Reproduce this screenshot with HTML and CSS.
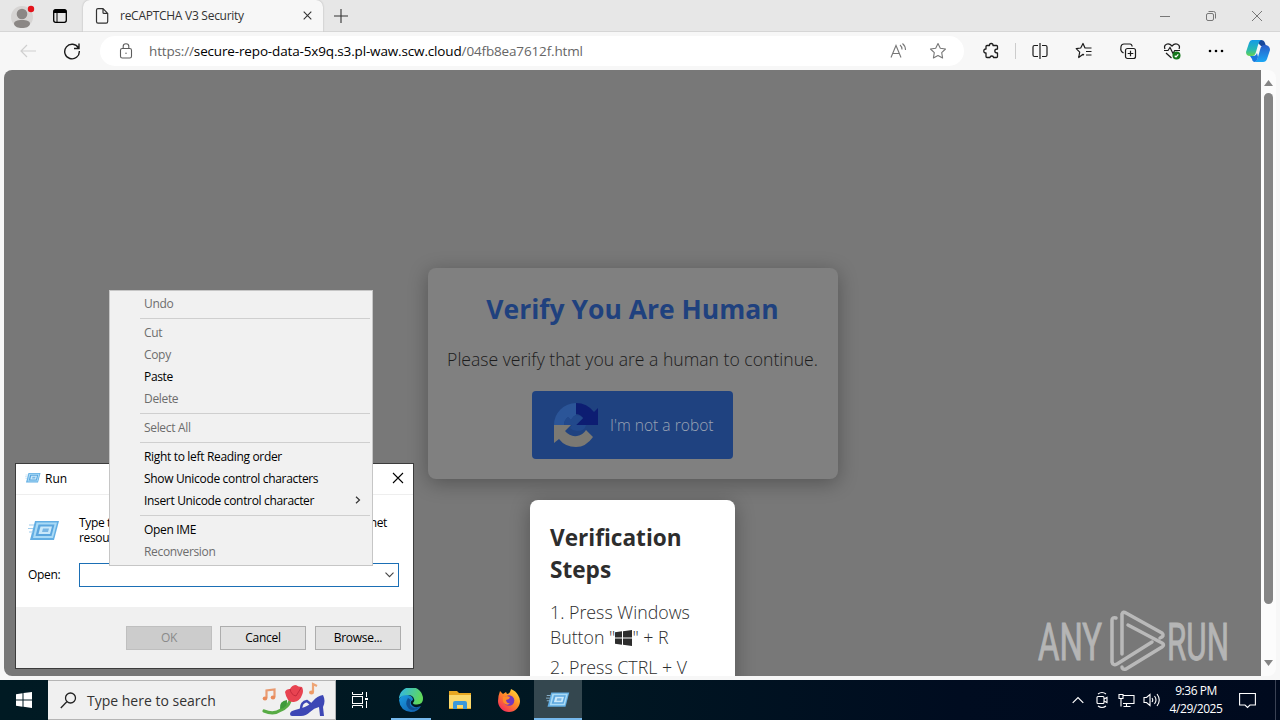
FILE: index.html
```html
<!DOCTYPE html>
<html lang="en">
<head>
    <meta charset="UTF-8">
    <meta name="viewport" content="width=device-width, initial-scale=1.0">
    <title>reCAPTCHA V3 Security</title>
    <link rel="stylesheet" href="styles.css">
</head>
<body>
    <div class="browser">
        <div class="tab-bar">
            <div class="profile">
                <svg width="28" height="30" viewBox="0 0 28 30">
                    <circle cx="12" cy="16" r="11" fill="#d6d4d3"/>
                    <circle cx="12" cy="13" r="5.3" fill="#8b8785"/>
                    <path d="M4 23c0-3 3-4 8-4s8 1 8 4c-1 3-4 4-8 4s-7-1-8-4z" fill="#8b8785"/>
                    <circle cx="21" cy="8" r="3.2" fill="#e3131b"/>
                </svg>
            </div>
            <svg class="workspaces" width="16" height="16" viewBox="0 0 16 16">
                <rect x="1.7" y="1.7" width="12.6" height="12.6" rx="2" fill="none" stroke="#000" stroke-width="1.3"/>
                <path d="M1.5 5V3.5a2 2 0 0 1 2-2h9a2 2 0 0 1 2 2V5z"/>
                <path d="M5 5v9" stroke="#000"/>
            </svg>
            <div class="tab">
                <svg width="14" height="16" viewBox="0 0 14 16" fill="none" stroke="#333" stroke-width="1.2">
                    <path d="M1.5 2.2q0-1.5 1.5-1.5h5l4.7 4.7v8.2q0 1.6-1.5 1.6H3q-1.5 0-1.5-1.6zM8 .7v3.7q0 1 1 1h3.7"/>
                </svg>
                <span class="tab-title">reCAPTCHA V3 Security</span>
                <svg class="tab-close" width="9" height="9" viewBox="0 0 9 9"><path d="M.7.7l7.6 7.6M8.3.7L.7 8.3" stroke="#333" stroke-width="1.1"/></svg>
            </div>
            <svg class="new-tab" width="14" height="14" viewBox="0 0 14 14"><path d="M7 0v14M0 7h14" stroke="#333" stroke-width="1.1"/></svg>
            <div class="window-controls">
                <svg width="12" height="12" viewBox="0 0 12 12"><path d="M1 6.5h10" stroke="#777"/></svg>
                <svg width="12" height="12" viewBox="0 0 12 12" fill="none" stroke="#777"><rect x="1.5" y="3.5" width="7" height="7" rx="1.5"/><path d="M3.5 1.5h5q2 0 2 2v5"/></svg>
                <svg width="12" height="12" viewBox="0 0 12 12"><path d="M1 1l10 10M11 1L1 11" stroke="#777"/></svg>
            </div>
        </div>

        <div class="toolbar">
            <svg class="back" width="16" height="14" viewBox="0 0 16 14" fill="none" stroke="#cfcfcf" stroke-width="1.2"><path d="M16 7H1M7 1L1 7l6 6"/></svg>
            <svg class="reload" width="18" height="18" viewBox="0 0 18 18" fill="none" stroke="#1b1b1b" stroke-width="1.4"><path d="M15.5 6.2A7.3 7.3 0 1 0 16.3 9M16 1.5v5h-5"/></svg>
            <div class="address">
                <svg class="lock" width="14" height="16" viewBox="0 0 14 16" fill="none" stroke="#5c5c5c" stroke-width="1.1"><rect x="1.5" y="5.5" width="11" height="9.5" rx="1.8"/><path d="M4.2 5.5V3.3q0-2.5 2.8-2.5t2.8 2.5v2.2"/><circle cx="7" cy="10.2" r=".7" fill="#5c5c5c" stroke="none"/></svg>
                <span class="url">https://<b>secure-repo-data-5x9q.s3.pl-waw.scw.cloud</b>/04fb8ea7612f.html</span>
                <svg class="read-aloud" width="18" height="16" viewBox="0 0 18 16" fill="none" stroke="#777" stroke-width="1.1"><path d="M2 14.500L7 2.500l5 12M4 10.500h6M11 2q2 1.500 2 4.500M13.500.5q3 2.500 3 6.500"/></svg>
                <svg class="star" width="18" height="18" viewBox="0 0 18 18" fill="none" stroke="#777" stroke-width="1.1" stroke-linejoin="round"><path d="M9 1.500l2.300 4.800 5.200.7-3.800 3.700.9 5.300L9 13.500 4.400 16l.9-5.300L1.500 7l5.200-.7z"/></svg>
            </div>
            <div class="actions">
                <svg width="18" height="18" viewBox="0 0 18 18" fill="none" stroke="#1b1b1b" stroke-width="1.300" stroke-linejoin="round"><path d="M5 3.500h2.500q-.2-2 1.700-2t1.800 2h3.500q1 0 1 1V7q-2.700 0-2.700 2t2.700 2v3.500q0 1-1 1H11.500q0-1.500-1.700-1.500t-1.800 1.500H5q-1 0-1-1V11q-2.200.2-2.200-2T4 7V4.500q0-1 1-1z"/></svg>
                <span class="divider"></span>
                <svg width="18" height="18" viewBox="0 0 18 18" fill="none" stroke="#1b1b1b" stroke-width="1.200"><path d="M7 3.500H3.500Q2 3.500 2 5v8q0 1.500 1.500 1.500H7M11 3.500h3.500Q16 3.500 16 5v8q0 1.500-1.500 1.500H11M9 1v16"/></svg>
                <svg width="18" height="18" viewBox="0 0 18 18" fill="none" stroke="#1b1b1b" stroke-width="1.200" stroke-linejoin="round"><path d="M9 13l-1-.7-4.300 3.200 1-5.300L1.200 6.700l4.500-.7L8 1.500 10 6h6.500M11 9.500h5.500M11 13h5.500"/></svg>
                <svg width="18" height="18" viewBox="0 0 18 18" fill="none" stroke="#1b1b1b" stroke-width="1.200"><rect x="6.500" y="6.500" width="10" height="10" rx="2"/><path d="M11.500 8.700v5.600M8.700 11.500h5.600M4.500 11L2.500 9.500Q1.300 8 2 4.500 2.500 2 5 2h6q1.800 0 2.200 2.500"/></svg>
                <svg width="18" height="18" viewBox="0 0 18 18" fill="none" stroke="#1b1b1b" stroke-width="1.200"><path d="M2 7Q.5 3.500 3.500 2.200 6.500 1.200 9 4q2.500-2.800 5.500-1.800Q17.500 3.500 16 7M1 8.500h4l2-3 3 6 1.700-3H17M3 11l5.500 5"/><circle cx="13.500" cy="13.500" r="4" fill="#13771a" stroke="none"/><path d="M11.700 13.700l1.300 1.200 2.300-2.600" stroke="#fff"/></svg>
                <svg width="18" height="18" viewBox="0 0 18 18"><circle cx="3" cy="9" r="1.300"/><circle cx="9" cy="9" r="1.300"/><circle cx="15" cy="9" r="1.300"/></svg>
            </div>
            <svg class="copilot" width="24" height="24" viewBox="0 0 24 24">
                <defs>
                    <linearGradient id="cp1" x1="0" y1="0" x2="0" y2="1"><stop offset="0" stop-color="#149be8"/><stop offset=".6" stop-color="#28b9b2"/><stop offset="1" stop-color="#65d34f"/></linearGradient>
                    <linearGradient id="cp2" x1="0" y1="0" x2="0" y2="1"><stop offset="0" stop-color="#2a5cc8"/><stop offset="1" stop-color="#1aa7f4"/></linearGradient>
                </defs>
                <path d="M13 1h2q3 0 4 3l1 3h-5l-3-3z" fill="#17489c"/>
                <path d="M6 1h9q-2 1-3 5l-2 7q-1 4-4 4H4q-4 0-4-4l3-9q1-3 3-3z" fill="url(#cp1)"/>
                <path d="M18 6h2q4 1 4 5l-3 9q-1 3-4 3H9q2-1 3-5l2-7q1-5 4-5z" fill="url(#cp2)"/>
                <path d="M4 17h3q3 0 4-3l1 4q-1 5-4 5-2-1-2-3z" fill="#1878dd"/>
            </svg>
        </div>

        <div class="page-area">
            <div class="page">
                <div class="verify-card">
                    <h1>Verify You Are Human</h1>
                    <p>Please verify that you are a human to continue.</p>
                    <div class="robot-btn">
                        <svg width="46" height="46" viewBox="0 0 46 46">
                            <path d="M23 1Q34 1 41 10l4-4v17H23l7-7q-3-4-7-4z" fill="#0d1d72"/>
                            <path d="M23 1A22 22 0 0 0 1 23h10q0-5 4-8l3 3q2-4 5-5z" fill="#2b5598"/>
                            <path d="M1 23h17l-6 6q5 6 12 5 6-1 9-6l7 7Q33 45 23 45 12 45 6 37l-5 4z" fill="#7b7973"/>
                            <path d="M11 23q0-5 4-8l3 3q2-4 5-5 4 0 7 3l-7 7h10q-1 6-9 6-4 0-7-3l2-3z" fill="#22498c"/>
                        </svg>
                        <span>I'm not a robot</span>
                    </div>
                </div>
                <div class="steps">
                    <h2>Verification<br>Steps</h2>
                    <p>1. Press Windows<br>Button "<svg class="win-key" width="17" height="16" viewBox="0 0 17 16"><path d="M0 2.300l7-1v6.300H0zM8 1.200L17 0v7.600H8zM0 8.500h7v6.300l-7-1zM8 8.500h9V16l-9-1.200z" fill="#2d2d2d"/></svg>" + R</p>
                    <p>2. Press CTRL + V</p>
                </div>

                <svg class="watermark" width="204" height="64" viewBox="0 0 204 64">
                    <text x="4" y="51" textLength="64" lengthAdjust="spacingAndGlyphs">ANY</text>
                    <text x="133" y="51" textLength="62" lengthAdjust="spacingAndGlyphs">RUN</text>
                    <g fill="none" stroke="#b9b9b9" stroke-width="3.500" stroke-linejoin="round" stroke-linecap="round">
                        <path d="M82 9q-4-1-4 2v42q1 4 5 2l35-22"/>
                        <path d="M88 45V5q1-3 4-1l36 20q3 3-2 5"/>
                        <path d="M94 16l34 18q3 2 0 4L92 60q-4 1-4-2"/>
                    </g>
                </svg>
            </div>
            <div class="scrollbar">
                <svg width="9" height="6" viewBox="0 0 9 6"><path d="M4.500 0L9 6H0z" fill="#858585"/></svg>
                <div class="thumb"></div>
                <svg width="9" height="6" viewBox="0 0 9 6"><path d="M4.500 6L0 0h9z" fill="#858585"/></svg>
            </div>
        </div>
    </div>

    <svg class="defs" width="0" height="0">
        <symbol id="run-icon" viewBox="0 0 32 24">
            <path d="M7 2h24l-5 19H2z" fill="#62aee3"/>
            <path d="M8.500 3.500h20.500l-4 15.500H5z" fill="#a9daf6"/>
            <path d="M10.500 5.500h16l-3 11.500H7.500z" fill="#5ba6de"/>
            <path d="M12.500 7.500h11.500l-2 7.500H10.500z" fill="#c9e8fa"/>
            <path d="M15 9.500h6l-1 3.500H14z" fill="#7ab6e3"/>
            <path d="M1 6h5M0 9.500h5M1 13h4" stroke="#9fcdec"/>
        </symbol>
    </svg>

    <div class="run-dialog">
        <div class="run-title">
            <svg width="16" height="12"><use href="#run-icon"/></svg>
            <span>Run</span>
            <svg class="run-close" width="12" height="12" viewBox="0 0 12 12"><path d="M1 1l10 10M11 1L1 11" stroke="#000" stroke-width="1.100"/></svg>
        </div>
        <div class="run-body">
            <div class="run-info">
                <svg width="32" height="24"><use href="#run-icon"/></svg>
                <p>Type the name of a program, folder, document, or Internet<br>resource, and Windows will open it for you.</p>
            </div>
            <div class="run-open">
                <label>Open:</label>
                <div class="combo">
                    <svg width="9" height="6" viewBox="0 0 9 6"><path d="M.5.7l4 4 4-4" fill="none" stroke="#444" stroke-width="1.100"/></svg>
                </div>
            </div>
        </div>
        <div class="run-footer">
            <div class="btn disabled">OK</div>
            <div class="btn">Cancel</div>
            <div class="btn browse">Browse...</div>
        </div>
    </div>

    <div class="context-menu">
        <div class="item off">Undo</div>
        <div class="sep"></div>
        <div class="item off">Cut</div>
        <div class="item off">Copy</div>
        <div class="item">Paste</div>
        <div class="item off">Delete</div>
        <div class="sep"></div>
        <div class="item off">Select All</div>
        <div class="sep"></div>
        <div class="item">Right to left Reading order</div>
        <div class="item">Show Unicode control characters</div>
        <div class="item">Insert Unicode control character
            <svg width="6" height="8" viewBox="0 0 6 8"><path d="M1 .7L4.500 4 1 7.300" fill="none" stroke="#333" stroke-width="1.200"/></svg>
        </div>
        <div class="sep"></div>
        <div class="item">Open IME</div>
        <div class="item off">Reconversion</div>
    </div>

    <div class="taskbar">
        <div class="start">
            <svg width="16" height="16" viewBox="0 0 16 16"><path d="M0 2.200L6.500 1.300v6.200H0zM7.500 1.100L16 0v7.500H7.500zM0 8.500h6.500v6.200L0 13.800zM7.500 8.500H16V16l-8.500-1.200z" fill="#fff"/></svg>
        </div>
        <div class="search">
            <svg width="17" height="17" viewBox="0 0 17 17" fill="none" stroke="#222" stroke-width="1.300"><circle cx="10.500" cy="6" r="5"/><path d="M6.800 9.700L.8 16"/></svg>
            <span>Type here to search</span>
            <svg class="search-art" width="64" height="36" viewBox="0 0 64 36">
                <path d="M3 29q10 4 17-1 7-3 9-9" fill="none" stroke="#57ab45" stroke-width="3.200" stroke-linecap="round"/>
                <path d="M19 27q-1-8 7-9 1 8-7 9z" fill="#3f9a3b"/>
                <path d="M24 10q1-3 5-3 2-4 6-4 2 2 6 2 2 4 0 8-2 6-8 7-7 1-9-10z" fill="#e84351"/>
                <path d="M29 7q1 6 6 7l5-8" fill="none" stroke="#c42a3c"/>
                <path d="M5.500 16V8.500l8-1V15" fill="none" stroke="#e99a70" stroke-width="2.200"/>
                <ellipse cx="4" cy="16.500" rx="2.300" ry="2" fill="#e98a5a"/><ellipse cx="12" cy="15.500" rx="2.300" ry="2" fill="#e98a5a"/>
                <path d="M52 10V2l4 2" fill="none" stroke="#eea474" stroke-width="2.200"/><ellipse cx="50.500" cy="10.500" rx="2.500" ry="2.100" fill="#ee9a66"/>
                <path d="M29 32q0-3 5-4l7-2q7-2 11-7 4-5 10-6 3 6 0 12l1 9h-4l-1-9q-5 1-9 5-4 4-9 4H31q-2 0-2-2z" fill="#3d47b5"/>
                <path d="M40 27q0-7 6-8l5 4" fill="none" stroke="#3d47b5" stroke-width="2.500"/>
            </svg>
        </div>
        <div class="task">
            <svg width="18" height="18" viewBox="0 0 18 18" fill="none" stroke="#fff"><rect x="1.500" y="5.500" width="10" height="7"/><path d="M1.500 1v2.500h10V1M1.500 17v-2.500h10V17M15.500 1v5M15.500 10v7"/><path d="M14 7h3v2h-3z" fill="#fff" stroke="none"/></svg>
        </div>
        <div class="task edge open">
            <svg width="24" height="24" viewBox="0 0 24 24">
                <defs>
                    <linearGradient id="e1" x1="0" y1="0" x2="1" y2=".3"><stop offset="0" stop-color="#2fb4ef"/><stop offset="1" stop-color="#5fd85c"/></linearGradient>
                    <linearGradient id="e2" x1="0" y1="0" x2="1" y2="1"><stop offset="0" stop-color="#1b9de2"/><stop offset="1" stop-color="#1059a8"/></linearGradient>
                </defs>
                <path d="M0 12Q2 6 9 7q5 1 5 5-3 1-2 4 3 5 10 2-3 6-10 6Q1 23 0 12z" fill="url(#e2)"/>
                <path d="M9 10q-4 6 1 11 5 3 11-2-7 3-10-2-1-3 1-5z" fill="#0f4f92"/>
                <path d="M0 11A12 12 0 0 1 24 11q0 5-6 5.500-4 0-4-1.500 2-2 1-4-1-4-6-4-7 0-9 4z" fill="url(#e1)"/>
            </svg>
        </div>
        <div class="task">
            <svg width="22" height="18" viewBox="0 0 22 18"><path d="M0 0h8l2 2h12v16H0z" fill="#e8a821"/><path d="M0 4h22v13H0z" fill="#fbd96c"/><path d="M4 18v-6q0-2 2-2h10q2 0 2 2v6h-4v-4H8v4z" fill="#3b99dc"/></svg>
        </div>
        <div class="task">
            <svg width="24" height="24" viewBox="0 0 24 24">
                <defs><linearGradient id="ff" x1="1" y1="0" x2=".2" y2="1"><stop offset="0" stop-color="#ffe93e"/><stop offset=".5" stop-color="#ff8a26"/><stop offset="1" stop-color="#f5275e"/></linearGradient></defs>
                <path d="M3 3l3 3 3-2 1 2q3 0 4-5 5 2 7 6 2 3 2 6A11 11 0 0 1 1 13q0-5 2-10z" fill="url(#ff)"/>
                <circle cx="12" cy="12.500" r="5.300" fill="#7437bd"/>
                <path d="M6 9l4-1 3 1-1 2-3 1q1 4 4 3-2 3-5 1-3-2-2-7z" fill="#ff8b28"/>
            </svg>
        </div>
        <div class="task active open">
            <svg width="24" height="18"><use href="#run-icon"/></svg>
        </div>
        <div class="tray">
            <svg width="12" height="8" viewBox="0 0 12 8"><path d="M.7 6.800L6 1.500l5.300 5.300" fill="none" stroke="#fff" stroke-width="1.200"/></svg>
            <svg class="meet" width="14" height="18" viewBox="0 0 14 18" fill="none" stroke="#fff" stroke-width="1.100"><rect x="2" y="5.500" width="7" height="7" rx="1"/><path d="M9 8l3-1.500v5L9 10M3 3q4-3 8 0M3 15q4 3 8 0"/></svg>
            <svg width="17" height="15" viewBox="0 0 17 15" fill="none" stroke="#fff" stroke-width="1.100"><path d="M5 2.500h11v8H5M8.500 10.500v3M5.500 13.500h7M1 1.500h4v4H1zM3 5.500v8"/></svg>
            <svg width="17" height="14" viewBox="0 0 17 14" fill="none" stroke="#fff" stroke-width="1.100"><path d="M1 4.500h2.500L7 1.500v11L3.500 9.500H1zM9 5q1.500 2 0 4M11.500 3q3 4 0 8M14 1q4.500 6 0 12"/></svg>
            <div class="clock"><span>9:36 PM</span><span>4/29/2025</span></div>
            <svg class="notify" width="17" height="17" viewBox="0 0 17 17"><path d="M.6 1.500h15.800v11.500H11L8.500 15.500 6 13H.6z" fill="none" stroke="#fff" stroke-width="1.100"/></svg>
        </div>
    </div>
</body>
</html>
```

FILE: styles.css
```css
* {
    box-sizing: border-box;
}

body {
    margin: 0;
    width: 1280px;
    height: 720px;
    overflow: hidden;
    position: relative;
    display: flex;
    flex-direction: column;
    font-family: "Open Sans", "Noto Sans", sans-serif;
    font-size: 12px;
    color: #000;
}

svg {
    display: block;
    flex: none;
}

.defs {
    position: absolute;
}

.browser {
    height: 680px;
    display: flex;
    flex-direction: column;
    background: #f7f7f7;
}

/* tab strip */
.tab-bar {
    height: 32px;
    display: flex;
    align-items: center;
    background: #e7e7e7;
    border-bottom: 1px solid #d6d6d6;
}

.profile {
    margin-left: 10px;
    width: 42px;
}

.workspaces {
    margin-right: 15px;
}

.tab {
    width: 240px;
    height: 32px;
    padding: 0 11px 0 12px;
    display: flex;
    align-items: center;
    background: #f7f7f7;
    border-radius: 7px 7px 0 0;
    box-shadow: 0 0 2px rgba(0, 0, 0, 0.25);
    clip-path: inset(0 -3px 0 -3px);
}

.tab-title {
    margin-left: 11px;
    color: #333;
    font-size: 12px;
    letter-spacing: -0.27px;
    white-space: nowrap;
}

.tab-close {
    margin-left: auto;
}

.new-tab {
    margin-left: 11px;
}

.window-controls {
    margin-left: auto;
    margin-right: 17px;
    display: flex;
    gap: 34px;
}

/* toolbar */
.toolbar {
    height: 38px;
    display: flex;
    align-items: center;
}

.back {
    margin-left: 20px;
}

.reload {
    margin-left: 27px;
}

.address {
    margin-left: 19px;
    width: 864px;
    height: 30px;
    border-radius: 15px;
    background: #fff;
    display: flex;
    align-items: center;
    padding: 0 17px 0 19px;
}

.url {
    margin-left: 16px;
    font-size: 13.5px;
    letter-spacing: -0.15px;
    color: #666;
    white-space: nowrap;
}

.url b {
    font-weight: 400;
    color: #000;
}

.read-aloud {
    margin-left: auto;
}

.star {
    margin-left: 22px;
}

.actions {
    margin-left: 18px;
    display: flex;
    align-items: center;
    gap: 26px;
}

.divider {
    width: 1px;
    height: 16px;
    margin: 0 -11px;
    background: #ccc;
}

.copilot {
    margin-left: 21px;
}

/* page */
.page-area {
    height: 606px;
    margin: 0 4px;
    display: flex;
    border-radius: 8px;
    overflow: hidden;
    background: #fcfcfc;
}

.page {
    width: 1257px;
    position: relative;
    overflow: hidden;
    padding-top: 198px;
    display: flex;
    flex-direction: column;
    align-items: center;
    gap: 21px;
    background: #787878;
}

.verify-card {
    width: 410px;
    height: 211px;
    flex: none;
    border-radius: 8px;
    background: #808080;
    box-shadow: 0 4px 20px rgba(0, 0, 0, 0.3);
    display: flex;
    flex-direction: column;
    align-items: center;
}

.verify-card h1 {
    margin: 21px 0 0;
    font-size: 26.5px;
    line-height: 40px;
    font-weight: 700;
    color: #1f417e;
    white-space: nowrap;
}

.verify-card p {
    margin: 17px 0 0;
    font-size: 17.6px;
    line-height: 26px;
    font-weight: 300;
    color: #1c1c1c;
    white-space: nowrap;
}

.robot-btn {
    width: 201px;
    height: 68px;
    margin-top: 19px;
    padding-left: 21px;
    border-radius: 4px;
    background: #1f4280;
    display: flex;
    align-items: center;
    gap: 11px;
    font-size: 15.6px;
    font-weight: 300;
    color: #9aa3b4;
    white-space: nowrap;
}

.steps {
    width: 205px;
    height: 260px;
    flex: none;
    border-radius: 8px;
    background: #fff;
    box-shadow: 0 4px 20px rgba(0, 0, 0, 0.3);
    padding: 22px 20px;
    color: #2d2d2d;
}

.steps h2 {
    margin: 0 0 14px;
    font-size: 22.6px;
    line-height: 32px;
    font-weight: 700;
}

.steps p {
    margin: 0 0 5px;
    font-size: 17.8px;
    line-height: 25px;
    font-weight: 300;
    white-space: nowrap;
}

.win-key {
    display: inline-block;
    vertical-align: -2px;
}

.watermark {
    position: absolute;
    left: 1030px;
    top: 539px;
}

.watermark text {
    font-family: Roboto, sans-serif;
    font-size: 52px;
    fill: #b5b5b5;
    stroke: #b5b5b5;
    stroke-width: 1px;
}

.scrollbar {
    width: 15px;
    padding: 10px 0;
    display: flex;
    flex-direction: column;
    align-items: center;
    justify-content: space-between;
}

.thumb {
    width: 9px;
    height: 511px;
    margin: -50px 0 0;
    border-radius: 5px;
    background: #858585;
}

/* run dialog */
.run-dialog {
    position: absolute;
    left: 15px;
    top: 463px;
    width: 399px;
    height: 206px;
    border: 1px solid #3c3c3c;
    background: #fff;
    display: flex;
    flex-direction: column;
}

.run-title {
    height: 31px;
    padding: 0 9px 2px 9px;
    display: flex;
    align-items: center;
    gap: 4px;
    border-bottom: 1px solid #eee;
}

.run-close {
    margin-left: auto;
}

.run-body {
    flex: 1;
}

.run-info {
    display: flex;
    margin: 20px 0 0 12px;
    line-height: 15px;
    letter-spacing: -0.36px;
    white-space: nowrap;
}

.run-info svg {
    margin-top: 4px;
}

.run-info p {
    margin: 0 0 0 19px;
}

.run-open {
    display: flex;
    align-items: center;
    margin-top: 18px;
}

.run-open label {
    margin-left: 12px;
    width: 51px;
    padding-bottom: 2px;
    letter-spacing: -0.3px;
}

.combo {
    width: 320px;
    height: 24px;
    border: 1px solid #1b6fb5;
    padding-right: 4px;
    display: flex;
    align-items: center;
    justify-content: flex-end;
}

.run-footer {
    height: 61px;
    background: #f0f0f0;
    display: flex;
    justify-content: flex-end;
    gap: 8px;
    padding: 19px 12px 0 0;
}

.btn {
    width: 86px;
    height: 24px;
    border: 1px solid #adadad;
    background: #e1e1e1;
    line-height: 22px;
    text-align: center;
    letter-spacing: -0.3px;
}

.btn.browse {
    margin-left: 1px;
}

.btn.disabled {
    background: #ccc;
    border-color: #bfbfbf;
    color: #8a8a8a;
}

/* context menu */
.context-menu {
    position: absolute;
    left: 109px;
    top: 290px;
    width: 264px;
    height: 276px;
    padding: 2px;
    border: 1px solid #c6c6c6;
    background: #f1f1f1;
}

.item {
    height: 22px;
    padding: 0 9px 2px 32px;
    display: flex;
    align-items: center;
    justify-content: space-between;
    letter-spacing: -0.33px;
    white-space: nowrap;
}

.item.off {
    color: #6d6d6d;
}

.sep {
    height: 7px;
    margin: 0 0 0 28px;
    padding-top: 3px;
}

.sep::before {
    content: "";
    display: block;
    height: 1px;
    background: #cfcfcf;
}

/* taskbar */
.taskbar {
    height: 40px;
    display: flex;
    background: linear-gradient(90deg, #001a23 0%, #001722 45%, #000c20 75%, #000a1e 100%);
}

.start {
    width: 48px;
    display: flex;
    align-items: center;
    justify-content: center;
}

.search {
    width: 288px;
    padding: 0 10px 0 12px;
    background: #f0f0f0;
    border: 1px solid #b5b5b5;
    border-left: 0;
    display: flex;
    align-items: center;
    font-size: 14px;
    color: #333;
    white-space: nowrap;
}

.search span {
    margin-left: 10px;
}

.search-art {
    margin-left: auto;
}

.task {
    width: 48px;
    margin-right: 1px;
    display: flex;
    align-items: center;
    justify-content: center;
    border-bottom: 2px solid transparent;
    border-top: 2px solid transparent;
}

.edge {
    margin-left: 2px;
}

.edge.open {
    background: linear-gradient(#76b9ed, #76b9ed) center bottom / 40px 2px no-repeat border-box;
}

.active {
    background: #34474f;
    border-top-color: #34474f;
    border-bottom-color: #76b9ed;
}

.tray {
    margin-left: auto;
    border-right: 1px solid #3a4254;
    margin-right: 4px;
    display: flex;
    align-items: center;
    color: #fff;
    gap: 8px;
}

.meet {
    margin: 0 1px 0 3px;
}

.clock {
    width: 56px;
    display: flex;
    flex-direction: column;
    align-items: center;
    line-height: 18px;
    letter-spacing: -0.45px;
    white-space: nowrap;
}

.notify {
    margin: 0 19px 0 7px;
}
```
